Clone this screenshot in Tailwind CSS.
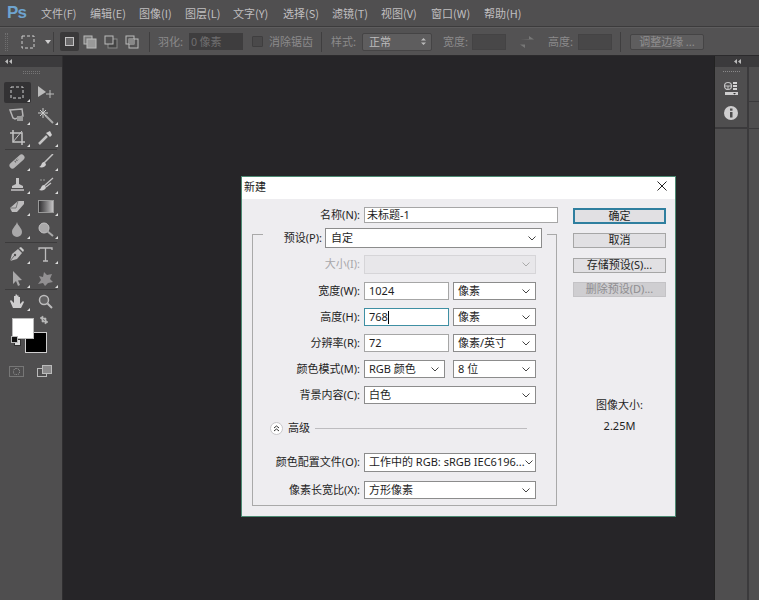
<!DOCTYPE html>
<html lang="zh-CN">
<head>
<meta charset="UTF-8" />
<title>新建</title>
<script src="https://cdn.jsdelivr.net/npm/@tailwindcss/browser@4"></script>
</head>
<body class="w-[759px] h-[600px] overflow-hidden bg-[#262528] relative font-['Noto_Sans_CJK_SC',sans-serif] text-[11px]">

<!-- menu bar -->
<div class="h-[27px] bg-[#504f50] flex items-center text-[#c0bfc0] border-b border-[#3c3b3c]">
  <div class="w-[41px] pl-[7px] pb-[2px] text-[#6ea3cf] text-[17px] font-bold font-['Liberation_Sans',sans-serif] leading-none tracking-tighter">Ps</div>
  <div class="w-[49px]">文件(F)</div>
  <div class="w-[49px]">编辑(E)</div>
  <div class="w-[46px]">图像(I)</div>
  <div class="w-[48px]">图层(L)</div>
  <div class="w-[50px]">文字(Y)</div>
  <div class="w-[49px]">选择(S)</div>
  <div class="w-[49px]">滤镜(T)</div>
  <div class="w-[50px]">视图(V)</div>
  <div class="w-[53px]">窗口(W)</div>
  <div>帮助(H)</div>
</div>

<!-- options bar -->
<div class="h-[29px] bg-[#535253] flex items-center text-[#8b8a8b] border-t border-[#5e5d5e] border-b-[#2b2a2c] border-b">
  <div class="ml-[5px] w-[3px] h-[18px] border-x border-dotted border-[#6f6e6f]"></div>
  <svg class="ml-[13px] w-[14px] h-[14px]" viewBox="0 0 14 14"><rect x="1" y="1" width="12" height="12" fill="none" stroke="#cfcecf" stroke-dasharray="3 2"/></svg>
  <svg class="ml-[10px] w-[6px] h-[4px]" viewBox="0 0 6 4"><path d="M0 0h6L3 4z" fill="#d0cfd0"/></svg>
  <div class="ml-[2px] w-px h-[20px] bg-[#3f3e3f]"></div>
  <div class="ml-[6px] w-[19px] h-[19px] bg-[#3a393a] rounded-[2px] flex items-center justify-center">
    <div class="w-[9px] h-[9px] border border-[#c4c3c4] bg-[#6a696a]"></div>
  </div>
  <svg class="ml-[4px] w-[14px] h-[14px]" viewBox="0 0 14 14"><rect x="1" y="1" width="8" height="8" fill="#777" stroke="#bbb"/><rect x="4" y="4" width="9" height="9" fill="#999" stroke="#bbb"/></svg>
  <svg class="ml-[7px] w-[14px] h-[14px]" viewBox="0 0 14 14"><rect x="4" y="4" width="9" height="9" fill="#444" stroke="#888"/><rect x="1" y="1" width="8" height="8" fill="#535253" stroke="#bbb"/></svg>
  <svg class="ml-[7px] w-[14px] h-[14px]" viewBox="0 0 14 14"><rect x="1" y="1" width="8" height="8" fill="none" stroke="#bbb"/><rect x="4" y="4" width="9" height="9" fill="none" stroke="#bbb"/><rect x="4" y="4" width="5" height="5" fill="#888"/></svg>
  <div class="ml-[10px] w-px h-[20px] bg-[#3f3e3f]"></div>
  <div class="ml-[8px] w-[31px]">羽化:</div>
  <div class="w-[54px] h-[17px] bg-[#3e3d3e] flex items-center pl-[2px] text-[#6f6e6f]">0 像素</div>
  <div class="ml-[9px] w-[11px] h-[11px] bg-[#4a494a] border border-[#3f3e3f] rounded-[1px]"></div>
  <div class="ml-[6px] w-[52px]">消除锯齿</div>
  <div class="w-px h-[20px] bg-[#3f3e3f]"></div>
  <div class="ml-[9px] w-[31px]">样式:</div>
  <div class="w-[70px] h-[18px] bg-[#5e5d5e] border border-[#454445] rounded-[2px] flex items-center justify-between pl-[6px] pr-[5px] text-[#bdbcbd]">
    <span>正常</span>
    <svg class="w-[5px] h-[9px]" viewBox="0 0 5 9"><path d="M0 3.500 2.500 1 5 3.500zM0 5.500h5L2.500 8z" fill="#bbb"/></svg>
  </div>
  <div class="ml-[11px] w-[29px]">宽度:</div>
  <div class="w-[34px] h-[16px] bg-[#484748] border border-[#444344]"></div>
  <svg class="ml-[14px] w-[14px] h-[12px]" viewBox="0 0 14 12"><path d="M0 3h9V0l5 3.500-5 0M14 8.500H5V12L0 8.500h5z" fill="#777"/></svg>
  <div class="ml-[14px] w-[30px]">高度:</div>
  <div class="w-[34px] h-[16px] bg-[#484748] border border-[#444344]"></div>
  <div class="ml-[8px] w-px h-[20px] bg-[#3f3e3f]"></div>
  <div class="ml-[9px] w-[74px] h-[16px] bg-[#5e5d5e] border border-[#454445] rounded-[2px] flex items-center justify-center text-[#8f8e8f]">调整边缘 ...</div>
</div>

<div class="flex h-[544px]">
  <!-- tools panel -->
  <div class="w-[63px] shrink-0 bg-[#4f4e4f] border-r border-[#2f2e30]">
    <div class="h-[11px] bg-[#3b3a3c] flex items-center pl-[5px]">
      <svg class="w-[7px] h-[5px]" viewBox="0 0 7 5"><path d="M3 0v5L0 2.500zM7 0v5L4 2.500z" fill="#bbb"/></svg>
    </div>
    <div class="mx-auto mt-[4px] w-[17px] h-[3px] border-y border-dotted border-[#767576]"></div>

    <div class="mt-[8px] px-[4px] grid grid-cols-2 gap-x-[2px] w-[63px]">
      <div class="relative h-[21px] bg-[#333234] rounded-[2px] flex items-center justify-center">
        <svg class="w-[14px] h-[13px]" viewBox="0 0 14 13"><rect x="1" y="1" width="12" height="11" fill="none" stroke="#d0cfd0" stroke-dasharray="3 2"/></svg>
        <svg class="absolute right-[1px] bottom-[1px] w-[3px] h-[3px]" viewBox="0 0 3 3"><path d="M3 0v3H0z" fill="#ddd"/></svg>
      </div>
      <div class="h-[21px] flex items-center justify-center">
        <svg class="w-[18px] h-[14px]" viewBox="0 0 18 14"><path d="M1 0l8 6-8 5z" fill="#bbb"/><path d="M13 4v8M9 8h8" stroke="#bbb"/></svg>
      </div>
    </div>

    <div class="mt-[2px] px-[4px] grid grid-cols-2 gap-x-[2px] gap-y-[1px] w-[63px]">
      <div class="relative h-[21px] flex items-center justify-center">
        <svg class="w-[16px] h-[15px]" viewBox="0 0 16 15"><path d="M1 2l12-1 1 7-8 3-2-1z" fill="none" stroke="#b5b4b5" stroke-width="1.500"/><rect x="8" y="8" width="6" height="5" fill="#999"/></svg>
        <svg class="absolute right-[1px] bottom-[1px] w-[3px] h-[3px]" viewBox="0 0 3 3"><path d="M3 0v3H0z" fill="#ddd"/></svg>
      </div>
      <div class="relative h-[21px] flex items-center justify-center">
        <svg class="w-[16px] h-[16px]" viewBox="0 0 16 16"><path d="M7 7l8 8" stroke="#aaa" stroke-width="2"/><path d="M5 0v10M0 5h10M2 2l6 6M8 2l-6 6" stroke="#ccc"/></svg>
        <svg class="absolute right-[1px] bottom-[1px] w-[3px] h-[3px]" viewBox="0 0 3 3"><path d="M3 0v3H0z" fill="#ddd"/></svg>
      </div>
      <div class="relative h-[21px] flex items-center justify-center">
        <svg class="w-[15px] h-[15px]" viewBox="0 0 15 15"><path d="M3 0v12h12M0 3h12v12" fill="none" stroke="#c4c3c4" stroke-width="1.500"/><path d="M12 1L3 12" stroke="#c4c3c4"/></svg>
        <svg class="absolute right-[1px] bottom-[1px] w-[3px] h-[3px]" viewBox="0 0 3 3"><path d="M3 0v3H0z" fill="#ddd"/></svg>
      </div>
      <div class="relative h-[21px] flex items-center justify-center">
        <svg class="w-[15px] h-[15px]" viewBox="0 0 15 15"><path d="M9 6l-7 7-1 1" stroke="#c4c3c4" stroke-width="2.500"/><path d="M8 3l4 4 2-2-2-4z" fill="#d0cfd0"/></svg>
        <svg class="absolute right-[1px] bottom-[1px] w-[3px] h-[3px]" viewBox="0 0 3 3"><path d="M3 0v3H0z" fill="#ddd"/></svg>
      </div>
    </div>

    <div class="mx-[5px] mt-[1px] h-px bg-[#3c3b3c]"></div>

    <div class="mt-[1px] px-[4px] grid grid-cols-2 gap-x-[2px] gap-y-[1.500px] w-[63px]">
      <div class="relative h-[21px] flex items-center justify-center">
        <svg class="w-[16px] h-[15px]" viewBox="0 0 16 15"><path d="M3.500 11.500l9-8" stroke="#b5b4b5" stroke-width="6" stroke-linecap="round"/><path d="M6 8l3-3" stroke="#626162" stroke-width="2" stroke-dasharray="1 1"/></svg>
        <svg class="absolute right-[1px] bottom-[1px] w-[3px] h-[3px]" viewBox="0 0 3 3"><path d="M3 0v3H0z" fill="#ddd"/></svg>
      </div>
      <div class="relative h-[21px] flex items-center justify-center">
        <svg class="w-[16px] h-[15px]" viewBox="0 0 16 15"><path d="M15 0L6 9" stroke="#c4c3c4" stroke-width="1.500"/><path d="M6 8c-3 0-2 4-5 5 3 1 7 0 7-3z" fill="#cfcecf"/></svg>
        <svg class="absolute right-[1px] bottom-[1px] w-[3px] h-[3px]" viewBox="0 0 3 3"><path d="M3 0v3H0z" fill="#ddd"/></svg>
      </div>
      <div class="relative h-[21px] flex items-center justify-center">
        <svg class="w-[15px] h-[15px]" viewBox="0 0 15 15"><path d="M6 1h3v6l4 2v2H2V9l4-2z" fill="#c4c3c4"/><path d="M1 13h13" stroke="#c4c3c4" stroke-width="1.500"/></svg>
        <svg class="absolute right-[1px] bottom-[1px] w-[3px] h-[3px]" viewBox="0 0 3 3"><path d="M3 0v3H0z" fill="#ddd"/></svg>
      </div>
      <div class="relative h-[21px] flex items-center justify-center">
        <svg class="w-[16px] h-[15px]" viewBox="0 0 16 15"><path d="M15 1L6 9M13 6L8 10" stroke="#c4c3c4" stroke-width="1.300"/><path d="M6 8c-3 0-2 3-5 5 3 1 7 0 7-3z" fill="#cfcecf"/><path d="M2 3h6" stroke="#999" stroke-dasharray="2 1"/></svg>
        <svg class="absolute right-[1px] bottom-[1px] w-[3px] h-[3px]" viewBox="0 0 3 3"><path d="M3 0v3H0z" fill="#ddd"/></svg>
      </div>
      <div class="relative h-[21px] flex items-center justify-center">
        <svg class="w-[16px] h-[13px]" viewBox="0 0 16 13"><path d="M1 8l8-7h6v3l-7 8H3z" fill="#bdbcbd"/><path d="M9 1l-2 7H1" fill="none" stroke="#777"/></svg>
        <svg class="absolute right-[1px] bottom-[1px] w-[3px] h-[3px]" viewBox="0 0 3 3"><path d="M3 0v3H0z" fill="#ddd"/></svg>
      </div>
      <div class="relative h-[21px] flex items-center justify-center">
        <div class="w-[16px] h-[13px] border border-[#999] bg-gradient-to-r from-[#333234] to-[#c4c3c4]"></div>
        <svg class="absolute right-[1px] bottom-[1px] w-[3px] h-[3px]" viewBox="0 0 3 3"><path d="M3 0v3H0z" fill="#ddd"/></svg>
      </div>
      <div class="relative h-[21px] flex items-center justify-center">
        <svg class="w-[12px] h-[15px]" viewBox="0 0 12 15"><path d="M6 0C5 4 1 6 1 10a5 5 0 0 0 10 0C11 6 7 4 6 0z" fill="#a9a8a9"/></svg>
        <svg class="absolute right-[1px] bottom-[1px] w-[3px] h-[3px]" viewBox="0 0 3 3"><path d="M3 0v3H0z" fill="#ddd"/></svg>
      </div>
      <div class="relative h-[21px] flex items-center justify-center">
        <svg class="w-[16px] h-[15px]" viewBox="0 0 16 15"><circle cx="6" cy="6" r="5" fill="#a9a8a9" stroke="#c4c3c4"/><path d="M9 9l6 5" stroke="#aaa" stroke-width="2"/></svg>
        <svg class="absolute right-[1px] bottom-[1px] w-[3px] h-[3px]" viewBox="0 0 3 3"><path d="M3 0v3H0z" fill="#ddd"/></svg>
      </div>
    </div>

    <div class="mx-[5px] mt-[2px] h-px bg-[#3c3b3c]"></div>

    <div class="mt-[1px] px-[4px] grid grid-cols-2 gap-x-[2px] gap-y-[3px] w-[63px]">
      <div class="relative h-[21px] flex items-center justify-center">
        <svg class="w-[16px] h-[16px]" viewBox="0 0 16 16"><path d="M1 15l2-7 6-5 4 4-5 6z" fill="#bdbcbd"/><path d="M10 2l2-1 3 3-1 2z" fill="#ccc"/><circle cx="6" cy="9" r="1.200" fill="#4f4e4f"/><path d="M1 15l4-5" stroke="#4f4e4f" stroke-width=".8"/></svg>
        <svg class="absolute right-[1px] bottom-[1px] w-[3px] h-[3px]" viewBox="0 0 3 3"><path d="M3 0v3H0z" fill="#ddd"/></svg>
      </div>
      <div class="relative h-[21px] flex items-center justify-center">
        <svg class="w-[15px] h-[15px]" viewBox="0 0 15 15"><path d="M1 3V1h13v2M7.500 1v13M5 14h5" fill="none" stroke="#bdbcbd" stroke-width="1.300"/></svg>
        <svg class="absolute right-[1px] bottom-[1px] w-[3px] h-[3px]" viewBox="0 0 3 3"><path d="M3 0v3H0z" fill="#ddd"/></svg>
      </div>
      <div class="relative h-[21px] flex items-center justify-center">
        <svg class="w-[11px] h-[15px]" viewBox="0 0 11 15"><path d="M1 0l9 9-4 .5L8 14l-2 1-2-5-3 3z" fill="#a9a8a9"/></svg>
        <svg class="absolute right-[1px] bottom-[1px] w-[3px] h-[3px]" viewBox="0 0 3 3"><path d="M3 0v3H0z" fill="#ddd"/></svg>
      </div>
      <div class="relative h-[21px] flex items-center justify-center">
        <svg class="w-[17px] h-[15px]" viewBox="0 0 17 15"><path d="M7 1l3 3 5-1-2 5 3 3-5 1-3 3-2-3-5 1 3-4-2-4 4 1z" fill="#918f91"/></svg>
        <svg class="absolute right-[1px] bottom-[1px] w-[3px] h-[3px]" viewBox="0 0 3 3"><path d="M3 0v3H0z" fill="#ddd"/></svg>
      </div>
    </div>

    <div class="mx-[5px] h-px bg-[#3c3b3c]"></div>

    <div class="mt-[1px] px-[4px] grid grid-cols-2 gap-x-[2px] w-[63px]">
      <div class="relative h-[21px] flex items-center justify-center">
        <svg class="w-[16px] h-[16px]" viewBox="0 0 16 16"><path d="M4 15L1 8l1-1 3 3V3h1.500v5V1.500H8V8 2.500h1.500V8 4H11v7l3-3 1 1-3 6z" fill="#cfcecf"/></svg>
        <svg class="absolute right-[1px] bottom-[1px] w-[3px] h-[3px]" viewBox="0 0 3 3"><path d="M3 0v3H0z" fill="#ddd"/></svg>
      </div>
      <div class="h-[21px] flex items-center justify-center">
        <svg class="w-[15px] h-[15px]" viewBox="0 0 15 15"><circle cx="6" cy="6" r="4.500" fill="#626162" stroke="#bdbcbd" stroke-width="1.500"/><path d="M9.500 9.500L14 14" stroke="#bdbcbd" stroke-width="2"/></svg>
      </div>
    </div>

    <!-- colour swatches -->
    <div class="relative mt-[6px] h-[44px]">
      <div class="absolute left-[25px] top-[14px] w-[22px] h-[21px] bg-black border border-[#cfcecf]"></div>
      <div class="absolute left-[12px] top-0 w-[22px] h-[21px] bg-white border border-[#bbb]"></div>
      <svg class="absolute left-[39px] -top-[3px] w-[10px] h-[10px]" viewBox="0 0 10 10"><path d="M1 3l3-2v4zM9 7L6 9V5zM3 3h4v3M7 7H3V4" fill="#bbb" stroke="#bbb" stroke-width=".6"/></svg>
      <div class="absolute left-[14px] top-[21px] w-[7px] h-[7px] bg-[#ddd] border border-[#333]"></div>
      <div class="absolute left-[11px] top-[18px] w-[7px] h-[7px] bg-[#111] border border-[#bbb]"></div>
    </div>

    <div class="mt-[3px] px-[9px] flex items-center">
      <div class="w-[15px] h-[11px] border border-[#777] flex items-center justify-center">
        <div class="w-[7px] h-[7px] rounded-full border border-dotted border-[#999]"></div>
      </div>
      <div class="relative ml-[13px] w-[16px] h-[13px]">
        <div class="absolute left-0 top-[3px] w-[10px] h-[9px] bg-[#4f4e4f] border border-[#bbb]"></div>
        <div class="absolute left-[5px] top-0 w-[10px] h-[9px] bg-[#8b8a8b] border border-[#bbb]"></div>
      </div>
    </div>
  </div>

  <!-- canvas -->
  <div class="flex-1"></div>

  <!-- right panels -->
  <div class="w-[45px] shrink-0 bg-[#2f2e30] border-l border-[#222]">
    <div class="h-[11px] bg-[#3b3a3c] flex items-center justify-center">
      <svg class="w-[7px] h-[5px]" viewBox="0 0 7 5"><path d="M3 0v5L0 2.500zM7 0v5L4 2.500z" fill="#bbb"/></svg>
    </div>
    <div class="flex gap-[2px] h-[533px] bg-[#3b3a3c]">
      <div class="w-[32px] flex flex-col gap-px">
        <div class="h-[60px] bg-[#4f4e4f] flex flex-col items-center">
          <div class="mt-[4px] w-[17px] h-[2px] border-t border-dotted border-[#8a898a]"></div>
          <svg class="mt-[8px] w-[14px] h-[15px]" viewBox="0 0 14 15"><circle cx="4" cy="5" r="3.500" fill="none" stroke="#c4c3c4" stroke-width="1.200"/><path d="M1 5h6M4 5v3" stroke="#c4c3c4"/><path d="M9 1h4v2H9zM9 4h4v2H9zM9 7h4v2H9z" fill="#d4d3d4"/><path d="M1 11h13v3H1z" fill="#cfcecf"/><path d="M9 12h3l-1.500 1.500z" fill="#333"/></svg>
          <svg class="mt-[10px] w-[14px] h-[14px]" viewBox="0 0 14 14"><circle cx="7" cy="7" r="7" fill="#cfcecf"/><rect x="6" y="6" width="2.500" height="5.500" fill="#4f4e4f"/><rect x="6" y="2.500" width="2.500" height="2.200" fill="#4f4e4f"/></svg>
        </div>
        <div class="flex-1 bg-[#4f4e4f] mt-px"></div>
      </div>
      <div class="flex-1 flex flex-col gap-px">
        <div class="h-[34px] bg-[#4f4e4f]"></div>
        <div class="h-[26px] bg-[#4f4e4f]"></div>
        <div class="flex-1 bg-[#4f4e4f]"></div>
      </div>
    </div>
  </div>
</div>

<!-- new document dialog -->
<div class="absolute left-[241px] top-[176px] w-[435px] h-[341px] bg-[#eeedf0] border border-[#4d8a73] text-[#1e1e1e]">
  <div class="h-[22px] bg-white flex items-center justify-between pb-[4px] pl-[2px] pr-[8px]">
    <span class="text-[#222]">新建</span>
    <svg class="w-[10px] h-[10px]" viewBox="0 0 10 10"><path d="M.5.500l9 9M9.500.500l-9 9" stroke="#222"/></svg>
  </div>
  <div class="flex font-['Noto_Sans','Noto_Sans_CJK_SC',sans-serif]">
    <div class="w-[331px] shrink-0">
      <!-- name -->
      <div class="mt-[8px] flex items-center h-[16px]">
        <div class="w-[118px] text-right">名称(N):</div>
        <div class="ml-[4px] w-[194px] h-[16px] bg-white border border-[#a6a6a6] pl-[2px] flex items-center">未标题-1</div>
      </div>

      <div class="ml-[10px] w-[305px] mt-[11px] h-[272px] border border-[#a9a9a9]">
        <!-- preset -->
        <div class="-mt-[7px] ml-[10px] w-[284px] h-[20px] bg-[#eeedf0] flex items-center">
          <div class="w-[59px] text-right">预设(P):</div>
          <div class="ml-[3px] w-[217px] h-[20px] bg-white border border-[#8c8c8c] pl-[5px] pr-[5px] flex items-center justify-between">
            <span>自定</span>
            <svg class="w-[8px] h-[5px]" viewBox="0 0 8 5"><path d="M.5.500L4 4 7.500.500" fill="none" stroke="#444"/></svg>
          </div>
        </div>
        <!-- size -->
        <div class="mt-[7px] flex items-center h-[19px]">
          <div class="w-[107px] text-right text-[#a8a7aa]">大小(I):</div>
          <div class="ml-[4px] w-[172px] h-[19px] bg-[#e8e7ea] border border-[#d6d5d8] pr-[5px] flex items-center justify-end">
            <svg class="w-[8px] h-[5px]" viewBox="0 0 8 5"><path d="M.5.500L4 4 7.500.500" fill="none" stroke="#aaa"/></svg>
          </div>
        </div>
        <!-- width -->
        <div class="mt-[8px] flex items-center h-[18px]">
          <div class="w-[107px] text-right">宽度(W):</div>
          <div class="ml-[4px] w-[85px] h-[18px] bg-white border border-[#a6a6a6] pl-[4px] flex items-center">1024</div>
          <div class="ml-[4px] w-[83px] h-[18px] bg-white border border-[#8c8c8c] pl-[4px] pr-[5px] flex items-center justify-between">
            <span>像素</span>
            <svg class="w-[8px] h-[5px]" viewBox="0 0 8 5"><path d="M.5.500L4 4 7.500.500" fill="none" stroke="#444"/></svg>
          </div>
        </div>
        <!-- height -->
        <div class="mt-[8px] flex items-center h-[18px]">
          <div class="w-[107px] text-right">高度(H):</div>
          <div class="ml-[4px] w-[85px] h-[18px] bg-white border border-[#3f8fa3] pl-[4px] flex items-center">768<span class="w-px h-[13px] bg-black"></span></div>
          <div class="ml-[4px] w-[83px] h-[18px] bg-white border border-[#8c8c8c] pl-[4px] pr-[5px] flex items-center justify-between">
            <span>像素</span>
            <svg class="w-[8px] h-[5px]" viewBox="0 0 8 5"><path d="M.5.500L4 4 7.500.500" fill="none" stroke="#444"/></svg>
          </div>
        </div>
        <!-- resolution -->
        <div class="mt-[8px] flex items-center h-[18px]">
          <div class="w-[107px] text-right">分辨率(R):</div>
          <div class="ml-[4px] w-[85px] h-[18px] bg-white border border-[#a6a6a6] pl-[4px] flex items-center">72</div>
          <div class="ml-[4px] w-[83px] h-[18px] bg-white border border-[#8c8c8c] pl-[4px] pr-[5px] flex items-center justify-between">
            <span>像素/英寸</span>
            <svg class="w-[8px] h-[5px]" viewBox="0 0 8 5"><path d="M.5.500L4 4 7.500.500" fill="none" stroke="#444"/></svg>
          </div>
        </div>
        <!-- colour mode -->
        <div class="mt-[8px] flex items-center h-[18px]">
          <div class="w-[107px] text-right">颜色模式(M):</div>
          <div class="ml-[4px] w-[81px] h-[18px] bg-white border border-[#8c8c8c] pl-[4px] pr-[5px] flex items-center justify-between">
            <span>RGB 颜色</span>
            <svg class="w-[8px] h-[5px]" viewBox="0 0 8 5"><path d="M.5.500L4 4 7.500.500" fill="none" stroke="#444"/></svg>
          </div>
          <div class="ml-[8px] w-[83px] h-[18px] bg-white border border-[#8c8c8c] pl-[4px] pr-[5px] flex items-center justify-between">
            <span>8 位</span>
            <svg class="w-[8px] h-[5px]" viewBox="0 0 8 5"><path d="M.5.500L4 4 7.500.500" fill="none" stroke="#444"/></svg>
          </div>
        </div>
        <!-- background -->
        <div class="mt-[8px] flex items-center h-[18px]">
          <div class="w-[107px] text-right">背景内容(C):</div>
          <div class="ml-[4px] w-[172px] h-[18px] bg-white border border-[#8c8c8c] pl-[4px] pr-[5px] flex items-center justify-between">
            <span>白色</span>
            <svg class="w-[8px] h-[5px]" viewBox="0 0 8 5"><path d="M.5.500L4 4 7.500.500" fill="none" stroke="#444"/></svg>
          </div>
        </div>
        <!-- advanced -->
        <div class="mt-[15px] flex items-center h-[18px] pl-[17px]">
          <div class="w-[13px] h-[13px] rounded-full bg-white border border-[#c8c7ca] flex items-center justify-center">
            <svg class="w-[7px] h-[7px]" viewBox="0 0 7 7"><path d="M1 3l2.500-2L6 3M1 6l2.500-2L6 6" fill="none" stroke="#333"/></svg>
          </div>
          <div class="ml-[5px]">高级</div>
          <div class="ml-[5px] w-[212px] h-px bg-[#bdbcbf]"></div>
        </div>
        <!-- colour profile -->
        <div class="mt-[16px] flex items-center h-[19px]">
          <div class="w-[107px] text-right whitespace-nowrap">颜色配置文件(O):</div>
          <div class="ml-[4px] w-[172px] h-[19px] bg-white border border-[#8c8c8c] pl-[4px] pr-[5px] flex items-center justify-between">
            <span class="whitespace-nowrap">工作中的 RGB: sRGB IEC6196...</span>
            <svg class="w-[8px] h-[5px] shrink-0" viewBox="0 0 8 5"><path d="M.5.500L4 4 7.500.500" fill="none" stroke="#444"/></svg>
          </div>
        </div>
        <!-- pixel aspect -->
        <div class="mt-[9px] flex items-center h-[18px]">
          <div class="w-[107px] text-right whitespace-nowrap">像素长宽比(X):</div>
          <div class="ml-[4px] w-[172px] h-[18px] bg-white border border-[#8c8c8c] pl-[4px] pr-[5px] flex items-center justify-between">
            <span>方形像素</span>
            <svg class="w-[8px] h-[5px]" viewBox="0 0 8 5"><path d="M.5.500L4 4 7.500.500" fill="none" stroke="#444"/></svg>
          </div>
        </div>
      </div>
    </div>

    <!-- buttons -->
    <div class="w-[93px] pt-[9px] flex flex-col items-center">
      <div class="w-full h-[16px] bg-[#e1e0e3] border-2 border-[#2f7f9f] flex items-center justify-center">确定</div>
      <div class="w-full mt-[9px] h-[15px] bg-[#e1e0e3] border border-[#a6a6a6] flex items-center justify-center">取消</div>
      <div class="w-full mt-[10px] h-[15px] bg-[#e1e0e3] border border-[#a6a6a6] flex items-center justify-center whitespace-nowrap">存储预设(S)...</div>
      <div class="w-full mt-[9px] h-[15px] bg-[#cfced1] border border-[#c4c3c6] flex items-center justify-center text-[#8e8d90] whitespace-nowrap">删除预设(D)...</div>
      <div class="mt-[100px]">图像大小:</div>
      <div class="mt-[4px]">2.25M</div>
    </div>
  </div>
</div>
</body>
</html>
